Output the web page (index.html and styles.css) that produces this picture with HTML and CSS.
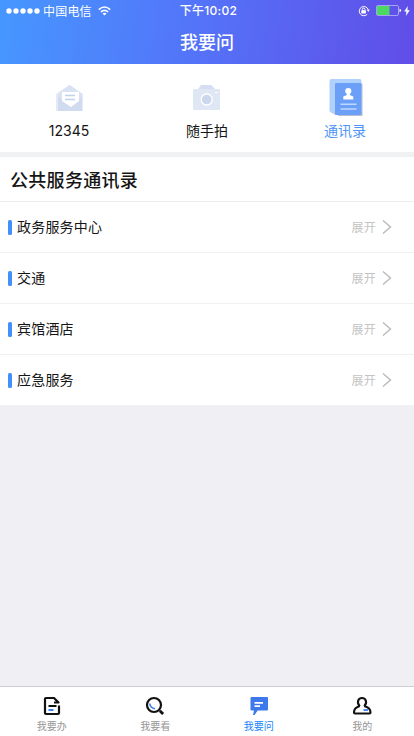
FILE: index.html
```html
<!DOCTYPE html>
<html lang="zh-CN">
<head>
<meta charset="utf-8">
<meta name="viewport" content="width=device-width, initial-scale=1">
<title>我要问</title>
<link rel="stylesheet" href="styles.css">
</head>
<body>
<div class="app">
  <header class="header">
    <div class="status">
      <div class="carrier">
        <svg width="34" height="8" viewBox="0 0 34 8" fill="#fff"><circle cx="3" cy="4" r="2.7"/><circle cx="10" cy="4" r="2.7"/><circle cx="17" cy="4" r="2.7"/><circle cx="24" cy="4" r="2.7"/><circle cx="31" cy="4" r="2.7"/></svg>
        <span class="carrier-name">中国电信</span>
        <svg width="13" height="10" viewBox="0 0 13 10" fill="none" stroke="#fff" stroke-width="1.6"><path d="M.8 3.6Q6.500-1.600 12.200 3.600M2.900 5.900Q6.500 2.700 10.100 5.900"/><path d="M4.500 7.600Q6.500 5.900 8.500 7.600L6.500 9.600Z" fill="#fff" stroke="none"/></svg>
      </div>
      <div class="time">下午10:02</div>
      <div class="power">
        <svg width="12" height="12" viewBox="0 0 12 12" fill="none" stroke="#fff"><path d="M9.2 9.3A4.600 4.600 0 1 1 10.100 4.300" stroke-width="1"/><path d="M8.700 4.600h3L10.300 7Z" fill="#fff" stroke="none"/><path d="M4.300 5.600V4.400a1.300 1.300 0 0 1 2.600 0v1.200"/><rect x="3.300" y="5.200" width="4.600" height="3.400" rx=".5" fill="#fff" stroke="none"/></svg>
        <svg width="26" height="11" viewBox="0 0 26 11"><rect x=".5" y=".5" width="22" height="10" rx="1.5" fill="none" stroke="#a7a3f3"/><path d="M1 1h12.500v9H1z" fill="#4bd964"/><path d="M23.500 3.800q1.600.3 1.600 1.700t-1.600 1.700z" fill="#fff"/></svg>
        <svg width="6" height="10" viewBox="0 0 6 10"><path d="M3.800 0 .2 5.600h2.300L1.800 10l4-5.700H3.400z" fill="#fff"/></svg>
      </div>
    </div>
    <h1 class="page-title">我要问</h1>
  </header>

  <nav class="tabs">
    <a class="tab">
      <svg class="tab-icon" width="40" height="44" viewBox="0 0 40 44"><path d="M7 17 20 8l14 9v17H7z" fill="#e4eaf6"/><path d="M9 17 21 8l12 9v17H9z" fill="#d9e2f3"/><path d="m9 19 13 11 11-11v15H9z" fill="#d0dbef"/><path d="M13 15h17v9l-8 6-9-6z" fill="#fff"/><path d="M16 18.500h10M16 22.500h10" stroke="#c3d0ea" stroke-width="1.600"/></svg>
      <span>12345</span>
    </a>
    <a class="tab">
      <svg class="tab-icon" width="40" height="44" viewBox="0 0 40 44"><path d="M7.500 12H11l3-4h10l4 4h4q1 0 1 1v19q0 1-1 1h-25q-1 0-1-1V13q0-1 1-1z" fill="#dfe6f4"/><path d="m12 12 2-4h10l4 4z" fill="#d5dff1"/><circle cx="19.700" cy="22.500" r="5.500" fill="#cbd7ed" stroke="#fff" stroke-width="1.400"/><path d="M28 15.500h3" stroke="#fff"/></svg>
      <span>随手拍</span>
    </a>
    <a class="tab tab-active">
      <svg class="tab-icon" width="40" height="44" viewBox="0 0 40 44"><path d="M36 7h1.500v32H13v-1h23z" fill="#b9bed0"/><path d="M5.500 35h5v3z" fill="#c4c4d0"/><rect x="4.500" y="2" width="32" height="33.500" rx="2" fill="#b1d1fd"/><rect x="10" y="6" width="26.500" height="32" rx="1" fill="#6b9ff8"/><circle cx="23.300" cy="14" r="3.100" fill="#fff"/><path d="M21.800 16h3v2l3.500 1.500v3h-10v-3l3.500-1.500z" fill="#fff"/><path d="M15.500 27.200h16M15.500 32h16" stroke="#c1d8fd" stroke-width="1.500"/></svg>
      <span>通讯录</span>
    </a>
  </nav>

  <main class="directory">
    <h2 class="section-title">公共服务通讯录</h2>
    <div class="row"><span class="row-name">政务服务中心</span><span class="expand">展开</span><svg class="chevron" width="10" height="16" viewBox="0 0 10 16"><path d="m1 1.500 7.500 6.500L1 14.500"/></svg></div>
    <div class="row"><span class="row-name">交通</span><span class="expand">展开</span><svg class="chevron" width="10" height="16" viewBox="0 0 10 16"><path d="m1 1.500 7.500 6.500L1 14.500"/></svg></div>
    <div class="row"><span class="row-name">宾馆酒店</span><span class="expand">展开</span><svg class="chevron" width="10" height="16" viewBox="0 0 10 16"><path d="m1 1.500 7.500 6.500L1 14.500"/></svg></div>
    <div class="row"><span class="row-name">应急服务</span><span class="expand">展开</span><svg class="chevron" width="10" height="16" viewBox="0 0 10 16"><path d="m1 1.500 7.500 6.500L1 14.500"/></svg></div>
  </main>

  <footer class="bottom-nav">
    <a class="nav-item">
      <svg width="20" height="20" viewBox="0 0 20 20" fill="none" stroke="#111" stroke-width="2.200" stroke-linejoin="round"><path d="M17 9.500V17q0 1-1 1H4q-1 0-1-1V3q0-1 1-1h8l4.500 4.500H12"/><path d="M6.500 10h8" stroke-width="2"/><path d="M6.500 14h5" stroke="#3b82f6" stroke-width="2"/></svg>
      <span>我要办</span>
    </a>
    <a class="nav-item">
      <svg width="20" height="20" viewBox="0 0 20 20" fill="none" stroke="#111" stroke-width="2.200"><circle cx="9" cy="9" r="7"/><path d="m14.800 14.800 3.300 3.300" stroke-width="2.800"/><path d="M4.800 7.500q.3 4.600 5.200 5.200" stroke="#3f7df5" stroke-width="1.600"/></svg>
      <span>我要看</span>
    </a>
    <a class="nav-item nav-active">
      <svg width="20" height="20" viewBox="0 0 20 20"><path d="M2.500 1h15.500q1 0 1 1v11.500q0 1-1 1H8.700L5.500 19H4l1-4.500H2.500q-1 0-1-1V2q0-1 1-1z" fill="#3d78ec"/><path d="M5.500 6.900H14M5.500 10.200h5.500" stroke="#fff" stroke-width="1.700"/></svg>
      <span>我要问</span>
    </a>
    <a class="nav-item">
      <svg width="20" height="20" viewBox="0 0 20 20" fill="none" stroke="#111" stroke-width="2.100" stroke-linejoin="round"><path d="M7.800 10C2.500 11.500 2 14 2 16.500q0 1 1 1h14.500q1 0 1-1c0-2.500-.5-5-6.300-6.500"/><path d="M7.800 10.200C4.500 7 5.800 2 10 2s5.500 5 2.200 8.200"/><path d="M11.500 14h4.500" stroke="#3b7cf4" stroke-width="1.800"/></svg>
      <span>我的</span>
    </a>
  </footer>
</div>
</body>
</html>
```
FILE: styles.css
```css
* { box-sizing: border-box; }
body {
  margin: 0;
  font-family: "Noto Sans CJK SC", sans-serif;
  color: #151515;
}
svg { display: block; flex: none; }
.app {
  height: 736px;
  display: flex;
  flex-direction: column;
  background: #efeff4;
  overflow: hidden;
}
.header {
  height: 64px;
  flex: none;
  background: linear-gradient(98deg, #4697ff 0%, #5473f8 48%, #604de7 100%);
  color: #fff;
}
.status {
  height: 20px;
  display: grid;
  grid-template-columns: 1fr auto 1fr;
  align-items: center;
  padding: 0 4px 0 6px;
  font-size: 12px;
  line-height: 20px;
}
.carrier, .power { display: flex; align-items: center; }
.carrier-name { margin: 0 6px 0 3px; letter-spacing: .2px; }
.time {
  padding: 1px 0 0 1px;
  font-family: Inter, "Noto Sans CJK SC", sans-serif;
  font-weight: 500;
  letter-spacing: .3px;
}
.power { justify-content: flex-end; gap: 4px; }
.power svg:first-child { margin-right: 2px; }
.power svg:last-child { margin-left: -2px; }
.page-title {
  margin: 0;
  height: 44px;
  font-size: 18px;
  font-weight: 500;
  line-height: 43px;
  text-align: center;
}
.tabs {
  display: grid;
  grid-template-columns: repeat(3, 1fr);
  height: 93px;
  flex: none;
  background: #fff;
  border-bottom: 5px solid #eff1f3;
}
.tab {
  display: flex;
  flex-direction: column;
  align-items: center;
  padding-top: 13px;
  font-family: Inter, "Noto Sans CJK SC", sans-serif;
  font-size: 14px;
  line-height: 20px;
}
.tab-active { color: #4f94f8; }
.directory { flex: none; background: #fff; }
.section-title {
  margin: 0;
  height: 45px;
  padding-left: 10px;
  border-bottom: 1px solid #ececec;
  font-size: 18px;
  font-weight: 500;
  letter-spacing: .3px;
  line-height: 44px;
}
.row {
  height: 51px;
  display: flex;
  align-items: center;
  padding: 0 22px 0 8px;
  border-bottom: 1px solid #f1f1f1;
  font-size: 14px;
}
.row::before {
  content: "";
  width: 4px;
  height: 15px;
  margin-right: 5px;
  border-radius: 1.5px;
  background: #4390fb;
}
.row-name { flex: 1; padding-bottom: 2px; letter-spacing: .2px; }
.expand { padding-bottom: 2px; color: #c3c3c3; font-size: 12px; letter-spacing: .2px; margin-right: 6px; }
.chevron { fill: none; stroke: #b9b9b9; stroke-width: 1.4; }
.bottom-nav {
  margin-top: auto;
  height: 50px;
  flex: none;
  display: grid;
  grid-template-columns: repeat(4, 1fr);
  background: #fff;
  border-top: 1px solid #cfcfd3;
}
.nav-item {
  display: flex;
  flex-direction: column;
  align-items: center;
  padding-top: 9px;
  gap: 3px;
  color: #969696;
  font-size: 10px;
  line-height: 14px;
}
.nav-active { color: #1683fb; }
```
